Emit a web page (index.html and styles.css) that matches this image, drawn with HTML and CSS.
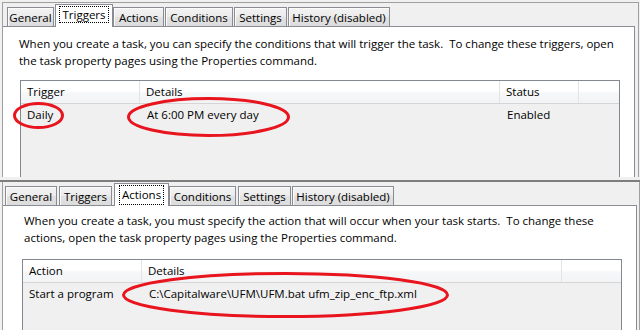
FILE: index.html
```html
<!DOCTYPE html>
<html lang="en">
<head>
<meta charset="utf-8">
<title>Task properties</title>
<link rel="stylesheet" href="styles.css">
</head>
<body>
<div class="page">
  <section class="shot shot-top">
    <div class="frame">
      <div class="tabs">
        <div class="tab w-general">General</div>
        <div class="tab tab-active w-triggers"><span class="focus">Triggers</span></div>
        <div class="tab w-actions">Actions</div>
        <div class="tab w-conditions">Conditions</div>
        <div class="tab w-settings">Settings</div>
        <div class="tab w-history">History (disabled)</div>
      </div>
      <div class="panel">
        <p class="intro">When you create a task, you can specify the conditions that will trigger the task.&nbsp; To change these triggers, open<br>the task property pages using the Properties command.</p>
        <div class="listview lv-triggers">
          <div class="lv-head"><div class="cell">Trigger</div><div class="cell">Details</div><div class="cell">Status</div><div class="cell"></div></div>
          <div class="lv-row"><div class="cell">Daily</div><div class="cell">At 6:00 PM every day</div><div class="cell">Enabled</div><div class="cell"></div></div>
        </div>
      </div>
    </div>
  </section>
  <section class="shot shot-bottom">
    <div class="edge">
      <div class="frame">
        <div class="tabs">
          <div class="tab b-general">General</div>
          <div class="tab b-triggers">Triggers</div>
          <div class="tab tab-active b-actions"><span class="focus">Actions</span></div>
          <div class="tab b-conditions">Conditions</div>
          <div class="tab b-settings">Settings</div>
          <div class="tab b-history">History (disabled)</div>
        </div>
        <div class="panel">
          <p class="intro">When you create a task, you must specify the action that will occur when your task starts.&nbsp; To change these<br>actions, open the task property pages using the Properties command.</p>
          <div class="listview lv-actions">
            <div class="lv-head"><div class="cell">Action</div><div class="cell">Details</div><div class="cell"></div></div>
            <div class="lv-row"><div class="cell">Start a program</div><div class="cell">C:\Capitalware\UFM\UFM.bat ufm_zip_enc_ftp.xml</div><div class="cell"></div></div>
          </div>
        </div>
      </div>
    </div>
  </section>
</div>
<svg class="marks" width="643" height="330" viewBox="0 0 643 330" aria-hidden="true">
  <ellipse cx="38.5" cy="115.5" rx="24" ry="12"/>
  <ellipse cx="208.5" cy="117" rx="80" ry="18.5"/>
  <ellipse cx="285.5" cy="295" rx="162" ry="21.5"/>
</svg>
</body>
</html>
```

FILE: styles.css
```css
* { box-sizing: border-box; }
html, body { margin: 0; padding: 0; }
body {
  width: 643px;
  height: 330px;
  overflow: hidden;
  background: #fff;
  font-family: "Open Sans", "Noto Sans", sans-serif;
  font-size: 11.5px;
  color: #000;
  position: relative;
}
.page { width: 640px; background: #f0f0f0; }
.shot { overflow: hidden; }
.shot-top { height: 177px; padding-top: 2px; }
.shot-bottom { height: 153px; padding-top: 3px; }
.edge { height: 100%; border-top: 2px solid #7e7e7e; }

.frame {
  margin-left: 2px;
  width: 637px;
  height: 100%;
  border: 1px solid #a0a0a0;
  border-bottom: 0;
  display: flex;
  flex-direction: column;
}
.shot-bottom .frame { border-top: 0; width: 638px; }

.tabs {
  display: flex;
  align-items: flex-end;
  height: 23px;
  flex: none;
  padding-left: 4px;
}
.shot-bottom .tabs { padding-left: 2px; }

.tab {
  height: 19px;
  margin-right: 1px;
  border: 1px solid #898c95;
  border-bottom: 0;
  background: linear-gradient(#f3f3f3, #ebebeb 50%, #e2e2e2 50%, #dcdcdc);
  box-shadow: inset 1px 1px 0 #fbfbfb;
  display: flex;
  align-items: center;
  justify-content: center;
  white-space: nowrap;
  line-height: 15px;
  padding-top: 1px;
}
.tab-active {
  position: relative;
  z-index: 1;
  height: 23px;
  margin-bottom: -1px;
  margin-right: 0;
  background: #fff;
  box-shadow: none;
  align-items: flex-start;
  padding-top: 1px;
}
.focus {
  border: 1px dotted #000;
  padding: 0 2px;
  line-height: 15px;
}
.b-actions .focus { line-height: 18px; }

.w-general { width: 47px; }
.w-triggers { width: 58px; }
.w-actions { width: 51px; }
.w-conditions { width: 68px; }
.w-settings { width: 53px; }
.w-history { width: 102px; }

.b-general { width: 52px; margin-right: 2px; }
.b-triggers { width: 53px; }
.b-actions { width: 55px; margin-left: 1px; }
.b-conditions { width: 67px; margin-right: 2px; }
.b-settings { width: 53px; }
.b-history { width: 102px; }

.panel {
  flex: 1;
  width: 632px;
  background: #fff;
  border-top: 1px solid #898c95;
  border-right: 1px solid #898c95;
}
.shot-bottom .panel { width: 634px; }

.intro {
  margin: 0;
  padding: 8px 0 0 16px;
  line-height: 17px;
  white-space: nowrap;
}
.shot-bottom .intro { padding: 6px 0 0 21px; }

.listview {
  margin: 11px 0 0 17px;
  width: 600px;
  height: 200px;
  border: 1px solid #828790;
  background: #f0f0f0;
}
.shot-bottom .listview { margin: 13px 0 0 19px; }

.lv-head, .lv-row { display: grid; }
.lv-triggers .lv-head, .lv-triggers .lv-row { grid-template-columns: 119px 360px 79px 1fr; }
.lv-actions .lv-head, .lv-actions .lv-row { grid-template-columns: 119px 420px 1fr; }

.lv-head {
  height: 23px;
  border-bottom: 1px solid #d5d5d5;
  background: linear-gradient(#ffffff, #ffffff 45%, #f6f7f8 55%, #f3f4f5);
}
.lv-head .cell {
  line-height: 22px;
  padding-left: 6px;
  border-right: 1px solid #e3e4e6;
}
.lv-head .cell:last-child { border-right: 0; }
.lv-row .cell {
  line-height: 22px;
  padding-left: 6px;
  white-space: nowrap;
}
.lv-row .cell + .cell { padding-left: 7px; }
.lv-head .cell + .cell { padding-left: 6px; }

.marks {
  position: absolute;
  left: 0;
  top: 0;
  pointer-events: none;
}
.marks ellipse {
  fill: none;
  stroke: #e8141e;
  stroke-width: 3;
}
```
